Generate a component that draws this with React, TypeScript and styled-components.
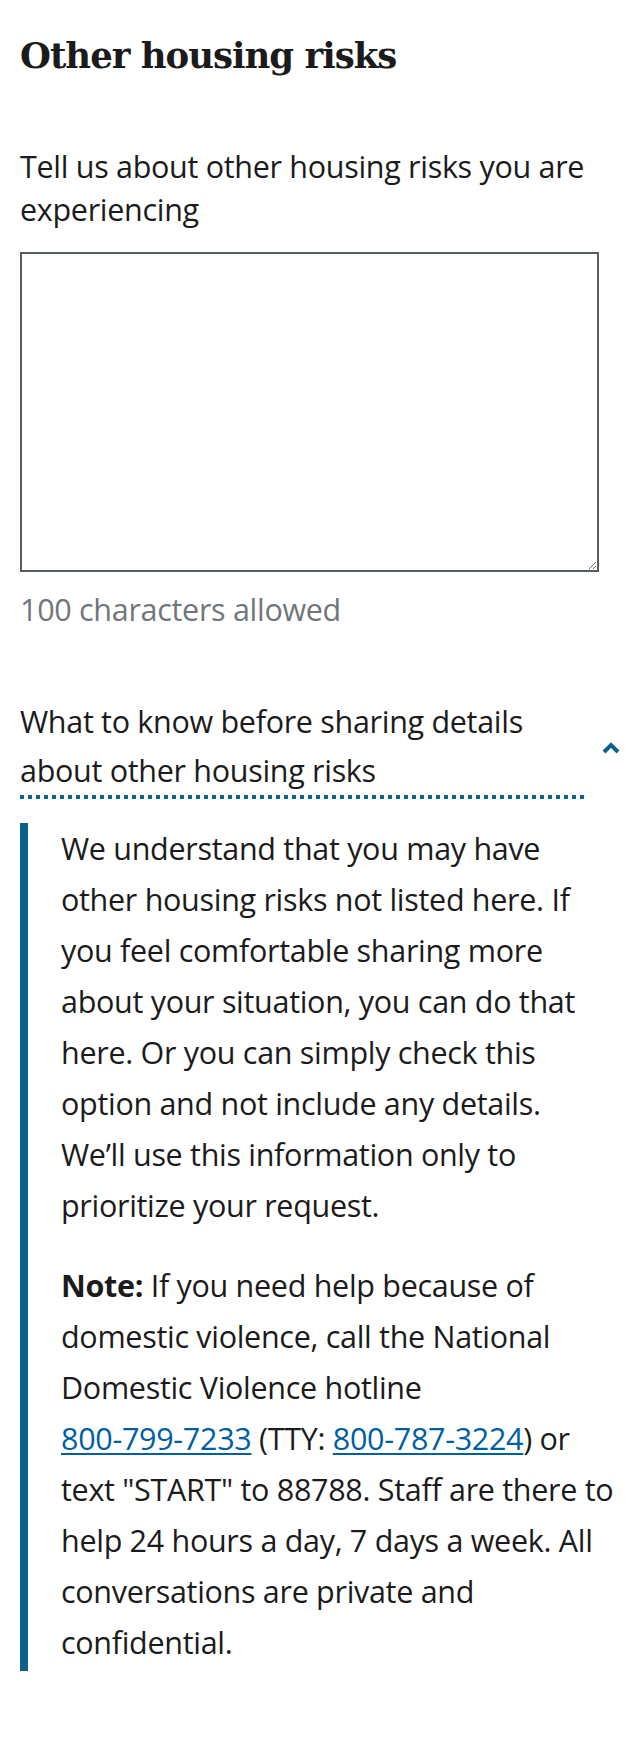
import React, { useState } from "react";
import styled, { createGlobalStyle } from "styled-components";

const GlobalStyle = createGlobalStyle`
  html, body { margin: 0; padding: 0; background: #ffffff; }
  body {
    font-family: "Open Sans", "Liberation Sans", sans-serif;
    color: #1b1b1b;
    -webkit-font-smoothing: antialiased;
  }
  * { box-sizing: border-box; }
`;

const Page = styled.main`
  padding: 34px 18px 60px 20px;
`;

const Heading = styled.h2`
  margin: 0;
  font-family: "DejaVu Serif", "Liberation Serif", serif;
  font-weight: 700;
  font-size: 35.5px;
  letter-spacing: -1px;
  line-height: 44px;
  color: #1b1b1b;
`;

const Field = styled.div`
  display: flex;
  flex-direction: column;
  margin-top: 67px;
`;

const Label = styled.label`
  display: block;
  font-size: 30.5px;
  letter-spacing: -0.3px;
  line-height: 43px;
  color: #1b1b1b;
`;

const TextArea = styled.textarea`
  display: block;
  margin-top: 21px;
  width: 579px;
  height: 320px;
  border: 2px solid #565c65;
  border-radius: 0;
  padding: 10px 14px;
  font-family: inherit;
  font-size: 30.5px;
  color: #1b1b1b;
  background: #ffffff;
  resize: vertical;
  outline: none;
`;

const Hint = styled.span`
  display: block;
  margin-top: 12px;
  font-size: 30.5px;
  letter-spacing: -0.3px;
  line-height: 51px;
  color: #71767a;
`;

const Accordion = styled.section`
  margin-top: 62px;
`;

const Trigger = styled.button`
  display: flex;
  align-items: center;
  width: 100%;
  padding: 0;
  margin: 0;
  border: 0;
  background: transparent;
  text-align: left;
  cursor: pointer;
  font: inherit;
  color: inherit;
`;

const TriggerText = styled.span`
  flex: 1;
  font-size: 30.5px;
  letter-spacing: -0.3px;
  line-height: 49px;
  color: #1b1b1b;
  padding-bottom: 4px;
  background-image: linear-gradient(to right, #0b6189 50%, transparent 50%);
  background-size: 8px 4px;
  background-repeat: repeat-x;
  background-position: left bottom;
`;

const Chevron = styled.svg`
  flex: none;
  width: 18px;
  height: 12px;
  margin-left: 16px;
  color: #0b6189;
`;

const Panel = styled.div`
  margin-top: 23.5px;
  border-left: 8px solid #0b6189;
  padding: 0 0 3px 33px;
`;

const Para = styled.p`
  margin: 0;
  font-size: 30.5px;
  letter-spacing: -0.3px;
  line-height: 51px;
  color: #1b1b1b;
  & + & {
    margin-top: 29px;
  }
`;

const Strong = styled.strong`
  font-weight: 700;
`;

const Link = styled.a`
  color: #005ea2;
  white-space: nowrap;
  text-decoration: underline;
  text-decoration-thickness: 2px;
  text-underline-offset: 3px;
`;

export default function App() {
  const [open, setOpen] = useState(true);
  return (
    <>
      <GlobalStyle />
      <Page>
        <Heading>Other housing risks</Heading>
        <Field>
          <Label htmlFor="other-risks">
            Tell us about other housing risks you are experiencing
          </Label>
          <TextArea id="other-risks" maxLength={100} />
          <Hint>100 characters allowed</Hint>
        </Field>
        <Accordion>
          <Trigger type="button" aria-expanded={open} onClick={() => setOpen(!open)}>
            <TriggerText>
              What to know before sharing details about other housing risks
            </TriggerText>
            <Chevron viewBox="0 0 18 12" aria-hidden="true">
              <polyline
                points="2,10 9,3 16,10"
                fill="none"
                stroke="currentColor"
                strokeWidth="4"
                strokeLinecap="butt"
                strokeLinejoin="miter"
              />
            </Chevron>
          </Trigger>
          {open && (
            <Panel>
              <Para>
                We understand that you may have
                <br />
                other housing risks not listed here. If
                <br />
                you feel comfortable sharing more
                <br />
                about your situation, you can do that
                <br />
                here. Or you can simply check this
                <br />
                option and not include any details.
                <br />
                We’ll use this information only to
                <br />
                prioritize your request.
              </Para>
              <Para>
                <Strong>Note:</Strong> If you need help because of
                <br />
                domestic violence, call the National
                <br />
                Domestic Violence hotline
                <br />
                <Link href="tel:8007997233">800-799-7233</Link> (TTY:{" "}
                <Link href="tel:8007873224">800-787-3224</Link>) or
                <br />
                text "START" to 88788. Staff are there to
                <br />
                help 24 hours a day, 7 days a week. All
                <br />
                conversations are private and
                <br />
                confidential.
              </Para>
            </Panel>
          )}
        </Accordion>
      </Page>
    </>
  );
}
